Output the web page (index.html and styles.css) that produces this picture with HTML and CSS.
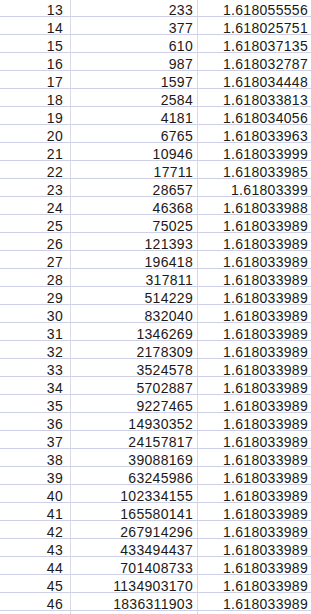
FILE: index.html
```html
<!DOCTYPE html>
<html>
<head>
<meta charset="utf-8">
<link rel="stylesheet" href="styles.css">
</head>
<body>
<div class="sheet">
<div class="c n">13</div><div class="c v">233</div><div class="c r">1.618055556</div>
<div class="c n">14</div><div class="c v">377</div><div class="c r">1.618025751</div>
<div class="c n">15</div><div class="c v">610</div><div class="c r">1.618037135</div>
<div class="c n">16</div><div class="c v">987</div><div class="c r">1.618032787</div>
<div class="c n">17</div><div class="c v">1597</div><div class="c r">1.618034448</div>
<div class="c n">18</div><div class="c v">2584</div><div class="c r">1.618033813</div>
<div class="c n">19</div><div class="c v">4181</div><div class="c r">1.618034056</div>
<div class="c n">20</div><div class="c v">6765</div><div class="c r">1.618033963</div>
<div class="c n">21</div><div class="c v">10946</div><div class="c r">1.618033999</div>
<div class="c n">22</div><div class="c v">17711</div><div class="c r">1.618033985</div>
<div class="c n">23</div><div class="c v">28657</div><div class="c r">1.61803399</div>
<div class="c n">24</div><div class="c v">46368</div><div class="c r">1.618033988</div>
<div class="c n">25</div><div class="c v">75025</div><div class="c r">1.618033989</div>
<div class="c n">26</div><div class="c v">121393</div><div class="c r">1.618033989</div>
<div class="c n">27</div><div class="c v">196418</div><div class="c r">1.618033989</div>
<div class="c n">28</div><div class="c v">317811</div><div class="c r">1.618033989</div>
<div class="c n">29</div><div class="c v">514229</div><div class="c r">1.618033989</div>
<div class="c n">30</div><div class="c v">832040</div><div class="c r">1.618033989</div>
<div class="c n">31</div><div class="c v">1346269</div><div class="c r">1.618033989</div>
<div class="c n">32</div><div class="c v">2178309</div><div class="c r">1.618033989</div>
<div class="c n">33</div><div class="c v">3524578</div><div class="c r">1.618033989</div>
<div class="c n">34</div><div class="c v">5702887</div><div class="c r">1.618033989</div>
<div class="c n">35</div><div class="c v">9227465</div><div class="c r">1.618033989</div>
<div class="c n">36</div><div class="c v">14930352</div><div class="c r">1.618033989</div>
<div class="c n">37</div><div class="c v">24157817</div><div class="c r">1.618033989</div>
<div class="c n">38</div><div class="c v">39088169</div><div class="c r">1.618033989</div>
<div class="c n">39</div><div class="c v">63245986</div><div class="c r">1.618033989</div>
<div class="c n">40</div><div class="c v">102334155</div><div class="c r">1.618033989</div>
<div class="c n">41</div><div class="c v">165580141</div><div class="c r">1.618033989</div>
<div class="c n">42</div><div class="c v">267914296</div><div class="c r">1.618033989</div>
<div class="c n">43</div><div class="c v">433494437</div><div class="c r">1.618033989</div>
<div class="c n">44</div><div class="c v">701408733</div><div class="c r">1.618033989</div>
<div class="c n">45</div><div class="c v">1134903170</div><div class="c r">1.618033989</div>
<div class="c n">46</div><div class="c v">1836311903</div><div class="c r">1.618033989</div>
<div class="c n"></div><div class="c v"></div><div class="c r"></div>
</div>
</body>
</html>
```

FILE: styles.css
```css
html, body {
  margin: 0;
  padding: 0;
  background: #ffffff;
  overflow: hidden;
}
.sheet {
  display: grid;
  grid-template-columns: 71px 127px 113px;
  grid-auto-rows: 18px;
  margin-top: -1px;
  font-family: "Liberation Sans", Arial, sans-serif;
  font-size: 14px;
  letter-spacing: 0.3px;
  color: #1a1a1a;
}
.c {
  box-sizing: border-box;
  height: 18px;
  border-bottom: 1px solid #cdd0e6;
  line-height: 17px;
  padding-top: 3px;
  text-align: right;
  white-space: nowrap;
  overflow: visible;
}
.n {
  border-right: 1px solid #d6d9e8;
  padding-right: 7px;
}
.v {
  border-right: 1px solid #d6d9e8;
  padding-right: 4px;
}
.r {
  padding-right: 3px;
}
```
